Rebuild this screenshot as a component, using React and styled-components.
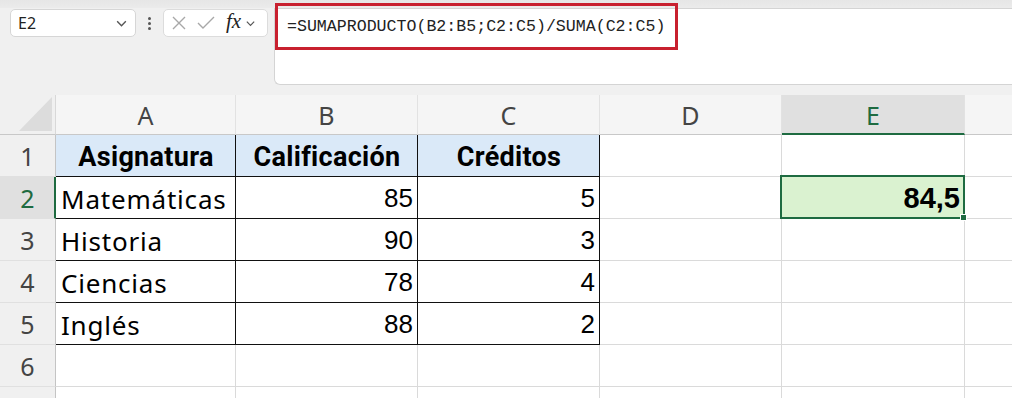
import styled, { createGlobalStyle } from "styled-components";

const GREEN = "#1e6b41";

const Global = createGlobalStyle`
    body {
        margin: 0;
        background: #f0f0f0;
        font-family: "Noto Sans", sans-serif;
        overflow: hidden;
    }
`

// F only shows its left edge in the window, so its letter is off-screen
const columns = ["A", "B", "C", "D", "E", ""];
const widths = [180, 182, 182, 182, 183, 182];

const rows = [
    { head: true, cells: ["Asignatura", "Calificación", "Créditos", "", "", ""] },
    { cells: ["Matemáticas", 85, 5, "", "84,5", ""] },
    { cells: ["Historia", 90, 3, "", "", ""] },
    { cells: ["Ciencias", 78, 4, "", "", ""] },
    { cells: ["Inglés", 88, 2, "", "", ""] },
    { cells: ["", "", "", "", "", ""] },
    { cells: ["", "", "", "", "", ""], hidden: true },
];

const Chevron = ({size = 12}) => (
    <svg width={size} height={size} viewBox="0 0 12 12">
        <path d="M2 4l4 4 4-4" fill="none" stroke="#555" strokeWidth="1.3" />
    </svg>
)

const App = () => {
    return (
        <>
            <Global />
            <Page>
                <TopBand />
                <Toolbar>
                    <NameBox>
                        <span>E2</span>
                        <Chevron size={13} />
                    </NameBox>
                    <Dots>
                        <i /><i /><i />
                    </Dots>
                    <FormulaButtons>
                        <svg width="14" height="14" viewBox="0 0 14 14">
                            <path d="M1 1l12 12M13 1L1 13" stroke="#a8a8a8" strokeWidth="1.4" />
                        </svg>
                        <svg width="18" height="14" viewBox="0 0 18 14">
                            <path d="M1 7l5 5L17 1" fill="none" stroke="#a8a8a8" strokeWidth="1.4" />
                        </svg>
                        <Fx>fx</Fx>
                        <Chevron size={11} />
                    </FormulaButtons>
                    <FormulaBar>
                        <Highlight>=SUMAPRODUCTO(B2:B5;C2:C5)/SUMA(C2:C5)</Highlight>
                    </FormulaBar>
                </Toolbar>
                <Grid>
                    <Corner><Triangle /></Corner>
                    { columns.map((c, i) => <ColHead key={i} $w={widths[i]} $active={c === "E"}>{c}</ColHead>) }
                    { rows.map((row, r) => (
                        <Row key={r}>
                            <RowHead $active={r === 1}>{row.hidden ? "" : r + 1}</RowHead>
                            { row.cells.map((v, c) => {
                                const inTable = c < 3 && r < 5;
                                const selected = r === 1 && c === 4;
                                return (
                                    <Cell
                                        key={c}
                                        $w={widths[c]}
                                        $table={inTable}
                                        $header={row.head && inTable}
                                        $num={typeof v === "number" || selected}
                                        $selected={selected}
                                    >
                                        {v}
                                    </Cell>
                                );
                            }) }
                        </Row>
                    )) }
                </Grid>
            </Page>
        </>
    );
}

const Page = styled.div`
    width: 1012px;
    height: 398px;
    overflow: hidden;
    background: #f0f0f0;
`

const TopBand = styled.div`
    height: 8px;
    background: linear-gradient(#e6e6e6, #ebebeb);
`

const Toolbar = styled.div`
    display: flex;
    align-items: flex-start;
    height: 87px;
    padding-left: 10px;
`

const NameBox = styled.div`
    margin-top: 1px;
    width: 126px;
    height: 28px;
    box-sizing: border-box;
    background: #fff;
    border: 1px solid #d6d6d6;
    border-radius: 5px;
    display: flex;
    align-items: center;
    justify-content: space-between;
    padding: 0 7px 0 7px;
    font-size: 16px;
    color: #222;
`

const Dots = styled.div`
    width: 27px;
    height: 28px;
    margin-top: 1px;
    display: flex;
    flex-direction: column;
    align-items: center;
    justify-content: center;
    gap: 2px;

    i {
        width: 3px;
        height: 3px;
        background: #555;
        border-radius: 50%;
    }
`

const FormulaButtons = styled.div`
    margin-top: 1px;
    width: 105px;
    height: 28px;
    box-sizing: border-box;
    background: #fff;
    border: 1px solid #dcdcdc;
    border-radius: 5px;
    display: flex;
    align-items: center;
    gap: 11px;
    padding-left: 8px;

    svg:last-child {
        margin-left: -7px;
    }
`

const Fx = styled.span`
    font-family: "Liberation Serif", "DejaVu Serif", serif;
    font-style: italic;
    font-size: 21px;
    color: #222;
    margin-top: -3px;
`

const FormulaBar = styled.div`
    margin-left: 6px;
    flex: 1;
    height: 77px;
    box-sizing: border-box;
    background: #fff;
    border: 1px solid #d4d4d4;
    border-right: none;
    border-radius: 0 0 0 6px;
`

const Highlight = styled.div`
    margin: -6px 0 0 0;
    width: 403px;
    height: 47px;
    box-sizing: border-box;
    border: 3px solid #c8202f;
    padding-left: 9px;
    display: flex;
    align-items: center;
    font-family: "Liberation Mono", "DejaVu Sans Mono", monospace;
    font-size: 16.6px;
    color: #222;
`

const Grid = styled.div`
    display: flex;
    flex-wrap: wrap;
    width: 1200px;
    background: #fff;
`

const Row = styled.div`
    display: flex;
    width: 100%;
    height: 42px;
`

const Corner = styled.div`
    width: 56px;
    height: 40px;
    box-sizing: border-box;
    background: #f0f0f0;
    border-right: 1px solid #d8d8d8;
    border-bottom: 1px solid #c8c8c8;
    display: flex;
    align-items: flex-end;
    justify-content: flex-end;
    padding: 0 3px 3px 0;
`

const Triangle = styled.div`
    width: 0;
    height: 0;
    border-left: 33px solid transparent;
    border-bottom: 34px solid #dcdcdc;
`

const ColHead = styled.div`
    width: ${p => p.$w}px;
    height: 40px;
    box-sizing: border-box;
    background: ${p => p.$active ? "#e0e0e0" : "#f5f5f5"};
    border-right: 1px solid #e2e2e2;
    border-bottom: ${p => p.$active ? `2px solid ${GREEN}` : "1px solid #c8c8c8"};
    display: flex;
    align-items: center;
    justify-content: center;
    font-size: 25px;
    color: ${p => p.$active ? GREEN : "#444"};
    padding-top: ${p => p.$active ? 1 : 0}px;
`

const RowHead = styled.div`
    width: 56px;
    flex: 0 0 56px;
    box-sizing: border-box;
    background: ${p => p.$active ? "#e0e0e0" : "#f0f0f0"};
    border-right: ${p => p.$active ? `2px solid ${GREEN}` : "1px solid #c4c4c4"};
    border-bottom: 1px solid #e0e0e0;
    display: flex;
    align-items: center;
    justify-content: center;
    font-size: 25px;
    color: ${p => p.$active ? GREEN : "#444"};
    padding-left: ${p => p.$active ? 1 : 0}px;
`

const Cell = styled.div`
    position: relative;
    flex: 0 0 ${p => p.$w}px;
    box-sizing: border-box;
    border-right: 1px solid ${p => p.$table ? "#111" : "#dadada"};
    border-bottom: 1px solid ${p => p.$table ? "#111" : "#dadada"};
    background: ${p => p.$header ? "#dae9f8" : p.$selected ? "#daf2d0" : "#fff"};
    display: flex;
    align-items: center;
    justify-content: ${p => p.$header ? "center" : p.$num ? "flex-end" : "flex-start"};
    padding: 2px 4px 0 5px;
    font-family: ${p => p.$header ? "Roboto, sans-serif" : p.$num ? "'Liberation Sans', Arial, sans-serif" : "'Noto Sans', sans-serif"};
    font-weight: ${p => p.$header || p.$selected ? 700 : 400};
    font-size: ${p => p.$header ? 27 : p.$selected ? 29 : 26}px;
    letter-spacing: ${p => p.$header ? 0.3 : p.$num ? 0 : 0.8}px;
    color: #000;

    ${p => p.$selected && `
        &::after {
            content: "";
            position: absolute;
            left: -2px;
            top: -2px;
            right: -1px;
            bottom: -1px;
            border: 2px solid ${GREEN};
        }
        &::before {
            content: "";
            position: absolute;
            right: -3px;
            bottom: -3px;
            width: 5px;
            height: 5px;
            background: ${GREEN};
            border: 1px solid #fff;
            z-index: 2;
        }
    `}
`

export default App;
